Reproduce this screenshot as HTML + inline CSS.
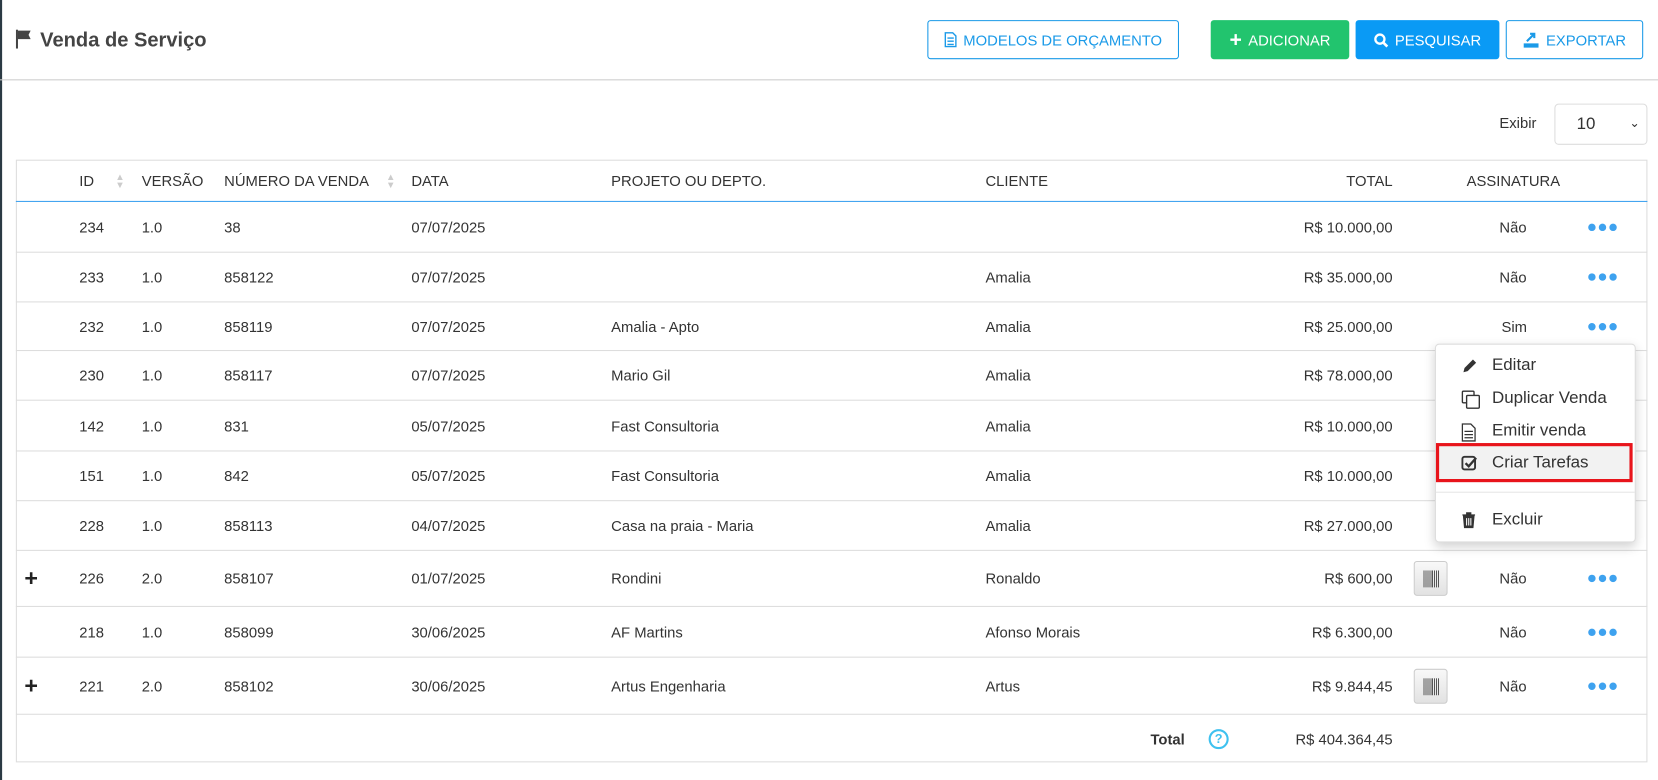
<!DOCTYPE html>
<html><head><meta charset="utf-8"><style>
*{box-sizing:border-box;margin:0;padding:0}
html,body{width:1658px;height:780px;overflow:hidden;background:#fff}
#w{position:absolute;left:0;top:0;width:1568px;height:738px;transform:scale(1.05740);transform-origin:0 0;font-family:"Liberation Sans",Arial,sans-serif;font-size:14px;color:#333}
.a{position:absolute;white-space:nowrap}
.btn{position:absolute;height:37px;border-radius:3px;font-size:14px;display:flex;align-items:center;justify-content:center;gap:6px}
.row{position:absolute;left:15px;width:1543px;border-top:1px solid #ddd}
.c{position:absolute;top:50%;transform:translateY(-50%);white-space:nowrap}
.r{text-align:right}
.dots{position:absolute;top:50%;transform:translateY(-50%);left:1502px;display:flex;gap:3px}
.dots i{width:7px;height:7px;border-radius:50%;background:#3ea2ef;display:block}
.bc{position:absolute;left:1337px;width:32px;height:33px;top:50%;transform:translateY(-50%);border:1px solid #ccc;border-radius:3px;background:linear-gradient(#f8f8f8,#e2e2e2)}
.bc:after{content:"";position:absolute;left:8px;top:8px;width:15px;height:16px;background:repeating-linear-gradient(90deg,#555 0 1px,transparent 1px 2px,#555 2px 3px,transparent 3px 4px)}
.mi{position:absolute;left:1358px;width:188px;height:30px;font-size:16px;color:#333}
.mi span{position:absolute;left:53px;top:50%;transform:translateY(-50%)}
.mi svg{position:absolute;left:24px;top:7px}
</style></head><body><div id="w">
<div class="a" style="left:0;top:0;width:2px;height:738px;background:#2b3a44"></div>
<svg class="a" style="left:15px;top:28px" width="16" height="18" viewBox="0 0 16 18"><rect x="0" y="0" width="2" height="18" fill="#444"/><path d="M2 1h12l-2 4 2 4H2z" fill="#444"/></svg>
<div class="a" style="left:38px;top:28px;font-size:19px;font-weight:bold;color:#444">Venda de Serviço</div>
<div class="btn" style="left:877px;top:19px;width:238px;border:1px solid #1a9ae8;color:#1a9ae8"><svg width="12" height="15" viewBox="0 0 12 15"><path d="M1 1h7l3 3v10H1z M3 6h6M3 9h6M3 12h6" fill="none" stroke="#1a9ae8" stroke-width="1.3"/></svg>MODELOS DE ORÇAMENTO</div>
<div class="btn" style="left:1145px;top:19px;width:131px;background:#22c46e;color:#fff"><b style="font-size:20px;line-height:1">+</b>ADICIONAR</div>
<div class="btn" style="left:1282px;top:19px;width:136px;background:#0a9af5;color:#fff"><svg width="14" height="14" viewBox="0 0 14 14"><circle cx="6" cy="6" r="4.3" fill="none" stroke="#fff" stroke-width="2.2"/><path d="M9 9l4 4" stroke="#fff" stroke-width="2.5"/></svg>PESQUISAR</div>
<div class="btn" style="left:1424px;top:19px;width:130px;border:1px solid #1a9ae8;color:#1a9ae8"><svg width="16" height="16" viewBox="0 0 16 16"><path d="M1 11v4h14v-4" fill="#1a9ae8"/><path d="M4 9l7-7M7 2h4v4" stroke="#1a9ae8" stroke-width="2" fill="none"/></svg>EXPORTAR</div>
<div class="a" style="left:0;top:75px;width:1568px;height:1px;background:#ccc"></div>
<div class="a" style="left:1418px;top:108px;font-size:14px">Exibir</div>
<div class="a" style="left:1470px;top:98px;width:88px;height:39px;border:1px solid #ddd;border-radius:4px;font-size:16px;padding:10px 0 0 20px">10<span style="position:absolute;right:6px;top:10px;font-size:12px">&#8964;</span></div>
<div class="a" style="left:15px;top:151px;width:1543px;height:570px;border:1px solid #ddd"></div>
<div class="row" style="top:151px;height:40px;border-top:none;border-bottom:1px solid #3ea2ef">
<div class="c" style="left:60px">ID</div><div class="c" style="left:94px;color:#ccc;font-size:9px;line-height:8px">▲<br>▼</div>
<div class="c" style="left:119px">VERSÃO</div><div class="c" style="left:197px">NÚMERO DA VENDA</div><div class="c" style="left:350px;color:#ccc;font-size:9px;line-height:8px">▲<br>▼</div>
<div class="c" style="left:374px">DATA</div><div class="c" style="left:563px">PROJETO OU DEPTO.</div><div class="c" style="left:917px">CLIENTE</div>
<div class="c" style="right:241px">TOTAL</div><div class="c" style="left:1372px">ASSINATURA</div></div>
<div class="row" style="top:191px;height:47px;border-top:none"><div class="c" style="left:60px">234</div><div class="c" style="left:119px">1.0</div><div class="c" style="left:197px">38</div><div class="c" style="left:374px">07/07/2025</div><div class="c" style="left:563px"></div><div class="c" style="left:917px"></div><div class="c" style="right:241px">R$ 10.000,00</div><div class="c" style="left:1403px">Não</div><div class="dots" style="left:1487px"><i></i><i></i><i></i></div></div>
<div class="row" style="top:238px;height:47px"><div class="c" style="left:60px">233</div><div class="c" style="left:119px">1.0</div><div class="c" style="left:197px">858122</div><div class="c" style="left:374px">07/07/2025</div><div class="c" style="left:917px">Amalia</div><div class="c" style="right:241px">R$ 35.000,00</div><div class="c" style="left:1403px">Não</div><div class="dots" style="left:1487px"><i></i><i></i><i></i></div></div>
<div class="row" style="top:285px;height:46px"><div class="c" style="left:60px">232</div><div class="c" style="left:119px">1.0</div><div class="c" style="left:197px">858119</div><div class="c" style="left:374px">07/07/2025</div><div class="c" style="left:563px">Amalia - Apto</div><div class="c" style="left:917px">Amalia</div><div class="c" style="right:241px">R$ 25.000,00</div><div class="c" style="left:1405px">Sim</div><div class="dots" style="left:1487px"><i></i><i></i><i></i></div></div>
<div class="row" style="top:331px;height:47px"><div class="c" style="left:60px">230</div><div class="c" style="left:119px">1.0</div><div class="c" style="left:197px">858117</div><div class="c" style="left:374px">07/07/2025</div><div class="c" style="left:563px">Mario Gil</div><div class="c" style="left:917px">Amalia</div><div class="c" style="right:241px">R$ 78.000,00</div></div>
<div class="row" style="top:378px;height:48px"><div class="c" style="left:60px">142</div><div class="c" style="left:119px">1.0</div><div class="c" style="left:197px">831</div><div class="c" style="left:374px">05/07/2025</div><div class="c" style="left:563px">Fast Consultoria</div><div class="c" style="left:917px">Amalia</div><div class="c" style="right:241px">R$ 10.000,00</div></div>
<div class="row" style="top:426px;height:47px"><div class="c" style="left:60px">151</div><div class="c" style="left:119px">1.0</div><div class="c" style="left:197px">842</div><div class="c" style="left:374px">05/07/2025</div><div class="c" style="left:563px">Fast Consultoria</div><div class="c" style="left:917px">Amalia</div><div class="c" style="right:241px">R$ 10.000,00</div></div>
<div class="row" style="top:473px;height:47px"><div class="c" style="left:60px">228</div><div class="c" style="left:119px">1.0</div><div class="c" style="left:197px">858113</div><div class="c" style="left:374px">04/07/2025</div><div class="c" style="left:563px">Casa na praia - Maria</div><div class="c" style="left:917px">Amalia</div><div class="c" style="right:241px">R$ 27.000,00</div></div>
<div class="row" style="top:520px;height:53px"><div class="c" style="left:8px;font-size:22px;font-weight:bold;color:#222">+</div><div class="c" style="left:60px">226</div><div class="c" style="left:119px">2.0</div><div class="c" style="left:197px">858107</div><div class="c" style="left:374px">01/07/2025</div><div class="c" style="left:563px">Rondini</div><div class="c" style="left:917px">Ronaldo</div><div class="c" style="right:241px">R$ 600,00</div><div class="bc" style="left:1322px"></div><div class="c" style="left:1403px">Não</div><div class="dots" style="left:1487px"><i></i><i></i><i></i></div></div>
<div class="row" style="top:573px;height:48px"><div class="c" style="left:60px">218</div><div class="c" style="left:119px">1.0</div><div class="c" style="left:197px">858099</div><div class="c" style="left:374px">30/06/2025</div><div class="c" style="left:563px">AF Martins</div><div class="c" style="left:917px">Afonso Morais</div><div class="c" style="right:241px">R$ 6.300,00</div><div class="c" style="left:1403px">Não</div><div class="dots" style="left:1487px"><i></i><i></i><i></i></div></div>
<div class="row" style="top:621px;height:54px"><div class="c" style="left:8px;font-size:22px;font-weight:bold;color:#222">+</div><div class="c" style="left:60px">221</div><div class="c" style="left:119px">2.0</div><div class="c" style="left:197px">858102</div><div class="c" style="left:374px">30/06/2025</div><div class="c" style="left:563px">Artus Engenharia</div><div class="c" style="left:917px">Artus</div><div class="c" style="right:241px">R$ 9.844,45</div><div class="bc" style="left:1322px"></div><div class="c" style="left:1403px">Não</div><div class="dots" style="left:1487px"><i></i><i></i><i></i></div></div>
<div class="row" style="top:675px;height:46px"><div class="c" style="left:1073px;font-weight:bold">Total</div><div class="c" style="left:1128px;width:19px;height:19px;border:2px solid #3ec1ef;border-radius:50%;color:#3ec1ef;font-size:12px;font-weight:bold;text-align:center;line-height:15px">?</div><div class="c" style="right:241px">R$ 404.364,45</div></div>
<div class="a" style="left:1357px;top:325px;width:190px;height:188px;background:#fff;border:1px solid #ddd;border-radius:4px;box-shadow:0 4px 10px rgba(0,0,0,.18)"></div>
<div class="mi" style="top:331px"><svg width="16" height="16" viewBox="0 0 16 16"><path d="M2 14l1-4 8-8 3 3-8 8z" fill="#333"/></svg><span>Editar</span></div>
<div class="mi" style="top:362px"><svg width="18" height="18" viewBox="0 0 18 18"><rect x="1" y="1" width="11" height="11" rx="1" fill="none" stroke="#333" stroke-width="1.3"/><rect x="5" y="5" width="12" height="12" rx="1" fill="#fff" stroke="#333" stroke-width="1.3"/></svg><span>Duplicar Venda</span></div>
<div class="mi" style="top:393px"><svg width="14" height="18" viewBox="0 0 14 18"><path d="M1 1h8l4 4v12H1z M3 8h8M3 11h8M3 14h8" fill="none" stroke="#333" stroke-width="1.2"/></svg><span>Emitir venda</span></div>
<div class="a" style="left:1358px;top:419px;width:186px;height:37px;background:#f2f2f2;border:3px solid #e8141b"></div>
<div class="mi" style="top:423px"><svg width="16" height="16" viewBox="0 0 16 16"><rect x="1" y="2" width="12" height="12" rx="2" fill="none" stroke="#333" stroke-width="1.8"/><path d="M4 8l3 3 7-8" fill="none" stroke="#333" stroke-width="2.2"/></svg><span>Criar Tarefas</span></div>
<div class="a" style="left:1358px;top:465px;width:188px;height:1px;background:#e5e5e5"></div>
<div class="mi" style="top:477px"><svg width="14" height="16" viewBox="0 0 14 16"><path d="M1 3h12M5 3V1h4v2M2 4h10l-1 11H3z" fill="#333" stroke="#333"/><path d="M5 6v7M7 6v7M9 6v7" stroke="#fff"/></svg><span>Excluir</span></div>
</div></body></html>
